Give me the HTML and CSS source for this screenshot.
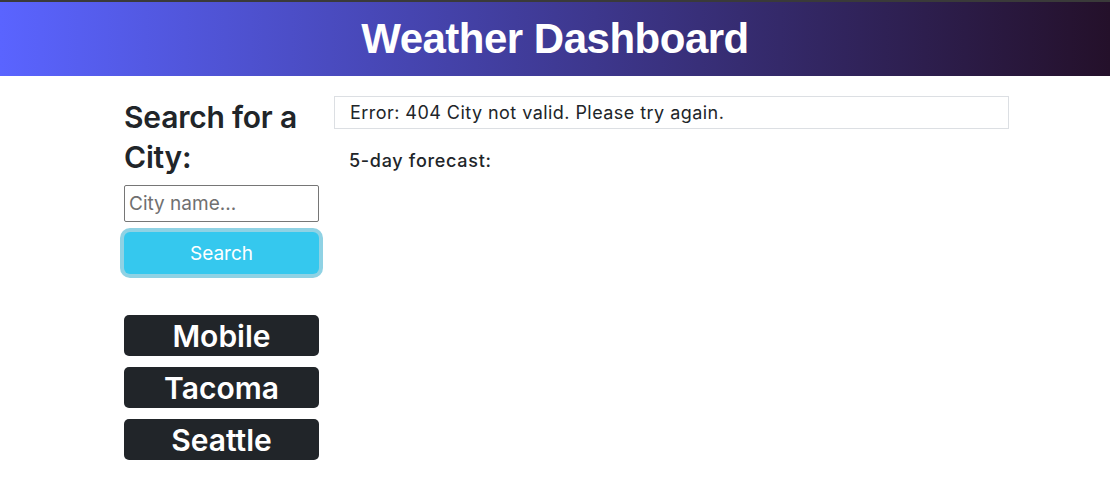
FILE: index.html
```html
<!DOCTYPE html>
<html>
<head>
<meta charset="utf-8">
<link rel="stylesheet" href="styles.css">
</head>
<body>
<div class="topline"></div>
<header class="header"><h1 class="title">Weather Dashboard</h1></header>
<main class="main">
  <aside class="side">
    <h2 class="side-title">Search for a City:</h2>
    <input class="city-input" type="text" placeholder="City name...">
    <button class="search-btn">Search</button>
    <div class="history">
      <button class="city-btn">Mobile</button>
      <button class="city-btn">Tacoma</button>
      <button class="city-btn">Seattle</button>
    </div>
  </aside>
  <section class="content">
    <div class="error">Error: 404 City not valid. Please try again.</div>
    <h3 class="forecast">5-day forecast:</h3>
  </section>
</main>
</body>
</html>
```
FILE: styles.css
```css
* { box-sizing: border-box; }
body {
  margin: 0;
  font-family: "Inter", "Liberation Sans", sans-serif;
  color: #212529;
  background: #fff;
}
.topline { height: 2px; background: #3a3a3a; }
.header {
  height: 74px;
  background: linear-gradient(to right, #5a64ff, #24102a);
  display: flex;
  align-items: center;
  justify-content: center;
}
.title {
  margin: 0;
  color: #fff;
  font-family: "Liberation Sans", Arial, sans-serif;
  font-weight: 700;
  font-size: 42px;
  letter-spacing: -0.5px;
}
.main {
  display: flex;
  gap: 15px;
  padding-left: 124px;
  padding-top: 20px;
}
.side { width: 195px; display: flex; flex-direction: column; }
.side-title {
  margin: 1px 0 8px;
  font-size: 30px;
  font-weight: 600;
  line-height: 40px;
  letter-spacing: -0.2px;
}
.city-input {
  height: 37px;
  border: 1px solid #767676;
  border-radius: 2px;
  padding: 0 4px;
  font-family: inherit;
  font-size: 19px;
  color: #212529;
}
.city-input::placeholder { color: #707070; }
.search-btn {
  margin-top: 10px;
  height: 42px;
  background: #35c8ee;
  color: #fff;
  border: none;
  border-radius: 6px;
  box-shadow: 0 0 0 4px #8fd2e4;
  font-family: inherit;
  font-size: 19px;
}
.history {
  margin-top: 41px;
  display: flex;
  flex-direction: column;
  gap: 11px;
}
.city-btn {
  height: 41px;
  background: #212529;
  color: #fff;
  border: none;
  border-radius: 5px;
  font-family: inherit;
  font-weight: 600;
  font-size: 30px;
  line-height: 1;
  padding: 0;
}
.content { width: 675px; }
.error {
  height: 33px;
  border: 1px solid #dcdfe3;
  padding: 0 15px;
  font-size: 18px;
  letter-spacing: 0.45px;
  line-height: 31px;
}
.forecast {
  margin: 21px 0 0 15px;
  font-size: 18px;
  letter-spacing: 0.7px;
  font-weight: 500;
}
```
